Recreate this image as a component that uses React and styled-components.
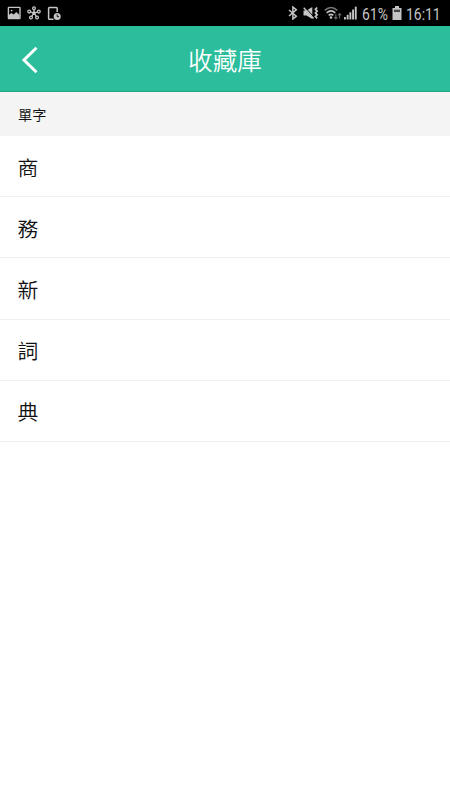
import React from "react";
import styled, { createGlobalStyle } from "styled-components";

const GlobalStyle = createGlobalStyle`
  * {
    box-sizing: border-box;
  }

  body {
    margin: 0;
    background-color: #fff;
    font-family: "Noto Sans CJK TC", "Noto Sans", sans-serif;
  }
`;

const Screen = styled.div`
  width: 100%;
  min-height: 800px;
  background-color: #fff;
`;

const StatusBar = styled.div`
  display: flex;
  align-items: center;
  justify-content: space-between;
  height: 26px;
  padding: 0 8px 0 7px;
  background-color: #000;
  color: #c4c4c4;
`;

const StatusGroup = styled.div`
  display: flex;
  align-items: center;
  height: 26px;
`;

const StatusIcon = styled.svg`
  display: block;
  flex: none;
  margin-left: ${(props) => props.$gap || 0}px;
`;

const StatusText = styled.span`
  width: ${(props) => props.$width}px;
  margin-left: ${(props) => props.$gap}px;
  padding-top: 3px;
  font-family: Roboto, sans-serif;
  font-size: 16px;
  line-height: 20px;
  white-space: nowrap;
  transform: scaleX(0.87);
  transform-origin: left center;
`;

const Header = styled.header`
  display: grid;
  grid-template-columns: 60px 1fr 60px;
  align-items: center;
  height: 66px;
  background-color: #2bbd9c;
  border-bottom: 1px solid #20a587;
`;

const BackButton = styled.button`
  display: flex;
  align-items: center;
  height: 65px;
  padding: 2px 0 0 20px;
  border: none;
  background: none;
  cursor: pointer;
`;

const Title = styled.h1`
  margin: 0;
  color: #fff;
  font-size: 24.6px;
  font-weight: 350;
  line-height: 36px;
  text-align: center;
`;

const SectionTitle = styled.div`
  display: flex;
  align-items: center;
  height: 44px;
  padding: 0 18px;
  background-color: #f4f4f4;
  color: #111;
  font-size: 14.2px;
  font-weight: 350;
`;

const WordList = styled.ul`
  margin: 0;
  padding: 0;
  list-style: none;
`;

const WordItem = styled.li`
  display: flex;
  align-items: center;
  height: 61.2px;
  padding: 1px 17.5px 0;
  border-bottom: 1px solid #f0f0f0;
  color: #111;
  font-size: 20.8px;
  font-weight: 350;
`;

const words = ["商", "務", "新", "詞", "典"];

const PictureIcon = () => (
  <StatusIcon width="14" height="14" viewBox="0 0 14 14">
    <rect x="1.4" y="1.4" width="11.6" height="11.2" rx="0.6" fill="none" stroke="#c4c4c4" strokeWidth="1.4" />
    <path d="M2 12V8.7l2.4-1.7 2.3 1.5 2.5-2.5 3.3 3v3z" fill="#c4c4c4" />
    <circle cx="4.6" cy="4.6" r="0.9" fill="#c4c4c4" />
  </StatusIcon>
);

const HubIcon = () => (
  <StatusIcon $gap={6} width="14" height="14" viewBox="0 0 14 14" fill="none" stroke="#c4c4c4" strokeWidth="1.3">
    <path d="M7 7V3.5M7 7 3 5.8M7 7l4-1.2M7 7l-2.5 3.7M7 7l2.5 3.7" />
    <circle cx="7" cy="2.2" r="1.4" />
    <circle cx="2.2" cy="5.6" r="1.4" />
    <circle cx="11.8" cy="5.6" r="1.4" />
    <circle cx="4" cy="11.5" r="1.4" />
    <circle cx="10" cy="11.5" r="1.4" />
    <circle cx="7" cy="7" r="1.2" fill="#c4c4c4" />
  </StatusIcon>
);

const DeviceClockIcon = () => (
  <StatusIcon $gap={6} width="15" height="15" viewBox="0 0 15 15">
    <path d="M6.5 13.3H2.4a.8.8 0 0 1-.8-.8V2.3a.8.8 0 0 1 .8-.8h7a.8.8 0 0 1 .8.8V6" fill="none" stroke="#c4c4c4" strokeWidth="1.5" />
    <circle cx="10.2" cy="10.4" r="3.5" fill="#c4c4c4" />
    <path d="M10.2 8.4v2.2h1.8" fill="none" stroke="#000" strokeWidth="0.9" />
  </StatusIcon>
);

const BluetoothIcon = () => (
  <StatusIcon width="10" height="14" viewBox="0 0 10 14">
    <path d="M1 4l7.3 6.2L4.9 13V1l3.4 2.8L1 10" fill="none" stroke="#c4c4c4" strokeWidth="1.5" />
  </StatusIcon>
);

const MuteVibrateIcon = () => (
  <StatusIcon $gap={5} width="16" height="14" viewBox="0 0 16 14">
    <path d="M.5 4.5h3L9.3 1v12L3.5 9.5h-3z" fill="#c4c4c4" />
    <path d="M1.8 1.2l9 9.6" stroke="#000" strokeWidth="1" />
    <path d="M.7 1.7l9.8 10.8" stroke="#c4c4c4" strokeWidth="1.4" />
    <path d="M14.2 1.5l-1.8 1.8 1.8 1.8-1.8 1.8 1.8 1.8-1.8 1.8 1.8 1.8" fill="none" stroke="#c4c4c4" strokeWidth="1.7" />
  </StatusIcon>
);

const WifiIcon = () => (
  <StatusIcon $gap={5} width="18" height="14" viewBox="0 0 18 14" fill="none">
    <path d="M.8 4.3Q7 -1.3 13.2 4.3" stroke="#777" strokeWidth="1.6" />
    <path d="M2.7 6.8Q7 3 11.3 6.8M4.7 9.3Q7 7.4 9.3 9.3" stroke="#c4c4c4" strokeWidth="1.6" />
    <circle cx="7" cy="11.5" r="1.3" fill="#c4c4c4" />
    <path d="M11.8 8v5m-1.6-1.8l1.6 1.8 1.6-1.8M15.6 12.5v-5m-1.6 1.8l1.6-1.8 1.6 1.8" stroke="#666" strokeWidth="1.1" />
  </StatusIcon>
);

const SignalIcon = () => (
  <StatusIcon $gap={2} width="13" height="14" viewBox="0 0 13 14" fill="#c4c4c4">
    <rect x="0" y="11" width="1.9" height="2.5" />
    <rect x="2.7" y="8.8" width="1.9" height="4.7" />
    <rect x="5.4" y="6.2" width="1.9" height="7.3" />
    <rect x="8.1" y="3.5" width="1.9" height="10" />
    <rect x="10.8" y="0.7" width="1.9" height="12.8" />
  </StatusIcon>
);

const BatteryIcon = () => (
  <StatusIcon $gap={4} width="10" height="14" viewBox="0 0 10 14">
    <path d="M3 0h4v2h2.5v12h-9V2H3z" fill="#c4c4c4" />
    <path d="M2 3.7h6V6H2z" fill="#444" />
  </StatusIcon>
);

const App = () => {
  return (
    <>
      <GlobalStyle />
      <Screen>
        <StatusBar>
          <StatusGroup>
            <PictureIcon />
            <HubIcon />
            <DeviceClockIcon />
          </StatusGroup>
          <StatusGroup>
            <BluetoothIcon />
            <MuteVibrateIcon />
            <WifiIcon />
            <SignalIcon />
            <StatusText $width={26} $gap={5}>61%</StatusText>
            <BatteryIcon />
            <StatusText $width={36} $gap={4}>16:11</StatusText>
          </StatusGroup>
        </StatusBar>
        <Header>
          <BackButton type="button" aria-label="返回">
            <svg width="20" height="28" viewBox="0 0 20 28">
              <path d="M16.5 1.8L4 14l12.5 12.2" fill="none" stroke="#fff" strokeWidth="3" />
            </svg>
          </BackButton>
          <Title>收藏庫</Title>
        </Header>
        <SectionTitle>單字</SectionTitle>
        <WordList>
          {words.map((word) => (
            <WordItem key={word}>{word}</WordItem>
          ))}
        </WordList>
      </Screen>
    </>
  );
};

export default App;
